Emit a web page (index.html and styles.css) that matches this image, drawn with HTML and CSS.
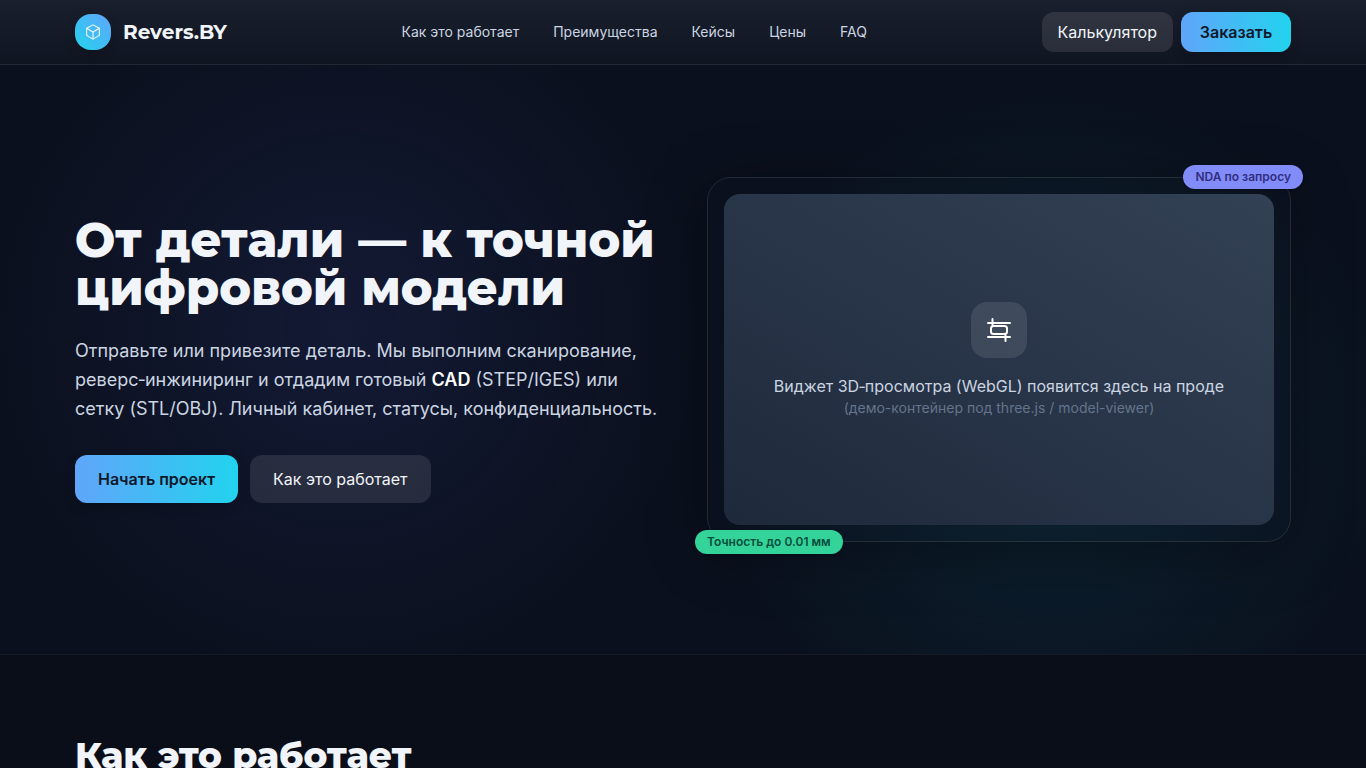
FILE: index.html
```html
<!DOCTYPE html>
<html lang="ru">

<head>
    <meta charset="UTF-8">
    <meta name="viewport" content="width=device-width, initial-scale=1.0">
    <title>Revers.BY</title>
    <link rel="stylesheet" href="styles.css">
</head>

<body>

    <header class="header">
        <div class="container header-inner">
            <a class="brand" href="#top">
                <span class="brand-logo">
                    <svg width="18" height="18" viewBox="0 0 24 24" fill="none" stroke="currentColor" stroke-width="1.5" stroke-linejoin="round">
                        <path d="M12 2.500l8.500 4.500v9.500L12 21.500l-8.500-5V7z" />
                        <path d="M3.500 7L12 12l8.500-5M12 12v9.500" />
                    </svg>
                </span>
                <span class="brand-name">Revers.BY</span>
            </a>
            <nav class="nav">
                <a href="#how">Как это работает</a>
                <a href="#benefits">Преимущества</a>
                <a href="#cases">Кейсы</a>
                <a href="#prices">Цены</a>
                <a href="#faq">FAQ</a>
            </nav>
            <div class="header-actions">
                <a class="btn btn-ghost" href="#calc">Калькулятор</a>
                <a class="btn btn-primary" href="#order">Заказать</a>
            </div>
        </div>
    </header>

    <section class="hero" id="top">
        <div class="container hero-grid">
            <div class="hero-text">
                <h1>От детали — к точной цифровой модели</h1>
                <p>Отправьте или привезите деталь. Мы выполним сканирование, реверс‑инжиниринг и отдадим готовый <strong>CAD</strong> (STEP/IGES) или сетку (STL/OBJ). Личный кабинет, статусы, конфиденциальность.</p>
                <div class="hero-actions">
                    <a class="btn btn-large btn-primary" href="#order">Начать проект</a>
                    <a class="btn btn-large btn-ghost" href="#how">Как это работает</a>
                </div>
            </div>
            <div class="preview">
                <div class="preview-screen">
                    <span class="preview-icon">
                        <svg width="28" height="28" viewBox="0 0 28 28" fill="none" stroke="currentColor" stroke-width="2" stroke-linecap="round">
                            <path d="M3 7h22M3 21h22M7.500 3v6M20.500 19v6" />
                            <rect x="6" y="10" width="16" height="8" rx="2.500" />
                        </svg>
                    </span>
                    <p class="preview-title">Виджет 3D‑просмотра (WebGL) появится здесь на проде</p>
                    <p class="preview-note">(демо-контейнер под three.js / model-viewer)</p>
                </div>
                <span class="badge badge-nda">NDA по запросу</span>
                <span class="badge badge-accuracy">Точность до 0.01 мм</span>
            </div>
        </div>
    </section>

    <section class="how" id="how">
        <div class="container">
            <h2>Как это работает</h2>
        </div>
    </section>

</body>

</html>
```

FILE: styles.css
```css
* {
    box-sizing: border-box;
}

body {
    margin: 0;
    font-family: Inter, "Noto Sans", sans-serif;
    font-size: 16px;
    line-height: 24px;
    color: #f1f5f9;
    background: #0a0e18;
}

h1, h2, p {
    margin: 0;
}

a {
    color: inherit;
    text-decoration: none;
}

.container {
    max-width: 1280px;
    margin: 0 auto;
    padding: 0 32px;
}

/* header */
.header {
    position: sticky;
    top: 0;
    z-index: 10;
    border-bottom: 1px solid #232835;
    background: linear-gradient(180deg, #1a1f2d, #101522);
}

.header-inner {
    display: flex;
    align-items: center;
    justify-content: space-between;
    height: 64px;
}

.brand {
    display: flex;
    align-items: center;
    gap: 12px;
}

.brand-logo {
    display: grid;
    place-items: center;
    width: 36px;
    height: 36px;
    border-radius: 16px;
    background: linear-gradient(45deg, #22d3ee, #60a5fa);
    box-shadow: 0 4px 12px rgba(0, 0, 0, 0.2);
}

.brand-name {
    font-family: Montserrat, Inter, sans-serif;
    font-size: 20px;
    font-weight: 700;
    line-height: 28px;
}

.nav {
    display: flex;
    gap: 34px;
    font-size: 14px;
    line-height: 20px;
    color: #cbd5e1;
}

.nav a:hover {
    color: #fff;
}

.header-actions {
    display: flex;
    gap: 8px;
}

.btn {
    min-width: 110px;
    padding: 8px 16px;
    border-radius: 12px;
    text-align: center;
}

.btn-large {
    padding: 12px 23px;
}

.btn-ghost {
    background: rgba(255, 255, 255, 0.1);
}

.btn-primary {
    font-weight: 600;
    color: #0f172a;
    background: linear-gradient(90deg, #60a5fa, #22d3ee);
    box-shadow: 0 4px 12px rgba(0, 0, 0, 0.2);
}

/* hero */
.hero {
    padding: 112px 0;
    background:
        radial-gradient(circle at 25% 45%, rgba(99, 102, 241, 0.11), transparent 360px),
        radial-gradient(circle at 77% 62%, rgba(34, 211, 238, 0.1), transparent 350px),
        #0a101d;
}

.hero-grid {
    display: grid;
    grid-template-columns: 1fr 1fr;
    gap: 48px;
    align-items: center;
}

h1, h2 {
    font-family: Montserrat, Inter, sans-serif;
    font-weight: 800;
}

h1 {
    font-size: 48px;
    line-height: 48px;
}

.hero-text p {
    margin-top: 24px;
    font-size: 18px;
    line-height: 29px;
    color: #cbd5e1;
}

.hero-text strong {
    font-weight: 600;
    color: #fff;
}

.hero-actions {
    display: flex;
    gap: 12px;
    margin-top: 32px;
}

.preview {
    position: relative;
    padding: 16px;
    border: 1px solid rgba(255, 255, 255, 0.1);
    border-radius: 24px;
    box-shadow: 0 10px 60px rgba(0, 0, 0, 0.35);
}

.preview-screen {
    display: flex;
    flex-direction: column;
    align-items: center;
    justify-content: center;
    aspect-ratio: 1.66;
    border-radius: 16px;
    text-align: center;
    background: linear-gradient(30deg, #1e293b, #334155);
}

.preview-icon {
    display: grid;
    place-items: center;
    width: 56px;
    height: 56px;
    margin-bottom: 16px;
    border-radius: 16px;
    color: #fff;
    background: rgba(255, 255, 255, 0.1);
}

.preview-title {
    color: #cbd5e1;
}

.preview-note {
    font-size: 14px;
    line-height: 20px;
    color: #64748b;
}

.badge {
    position: absolute;
    padding: 4px 12px;
    border-radius: 12px;
    font-size: 12px;
    font-weight: 600;
    line-height: 16px;
    box-shadow: 0 1px 3px rgba(0, 0, 0, 0.2);
}

.badge-nda {
    top: -13px;
    right: -13px;
    color: #312e81;
    background: #818cf8;
}

.badge-accuracy {
    bottom: -13px;
    left: -13px;
    color: #064e3b;
    background: #34d399;
}

/* how it works */
.how {
    padding: 80px 0;
    border-top: 1px solid rgba(255, 255, 255, 0.05);
}

h2 {
    font-size: 36px;
    line-height: 40px;
}
```
